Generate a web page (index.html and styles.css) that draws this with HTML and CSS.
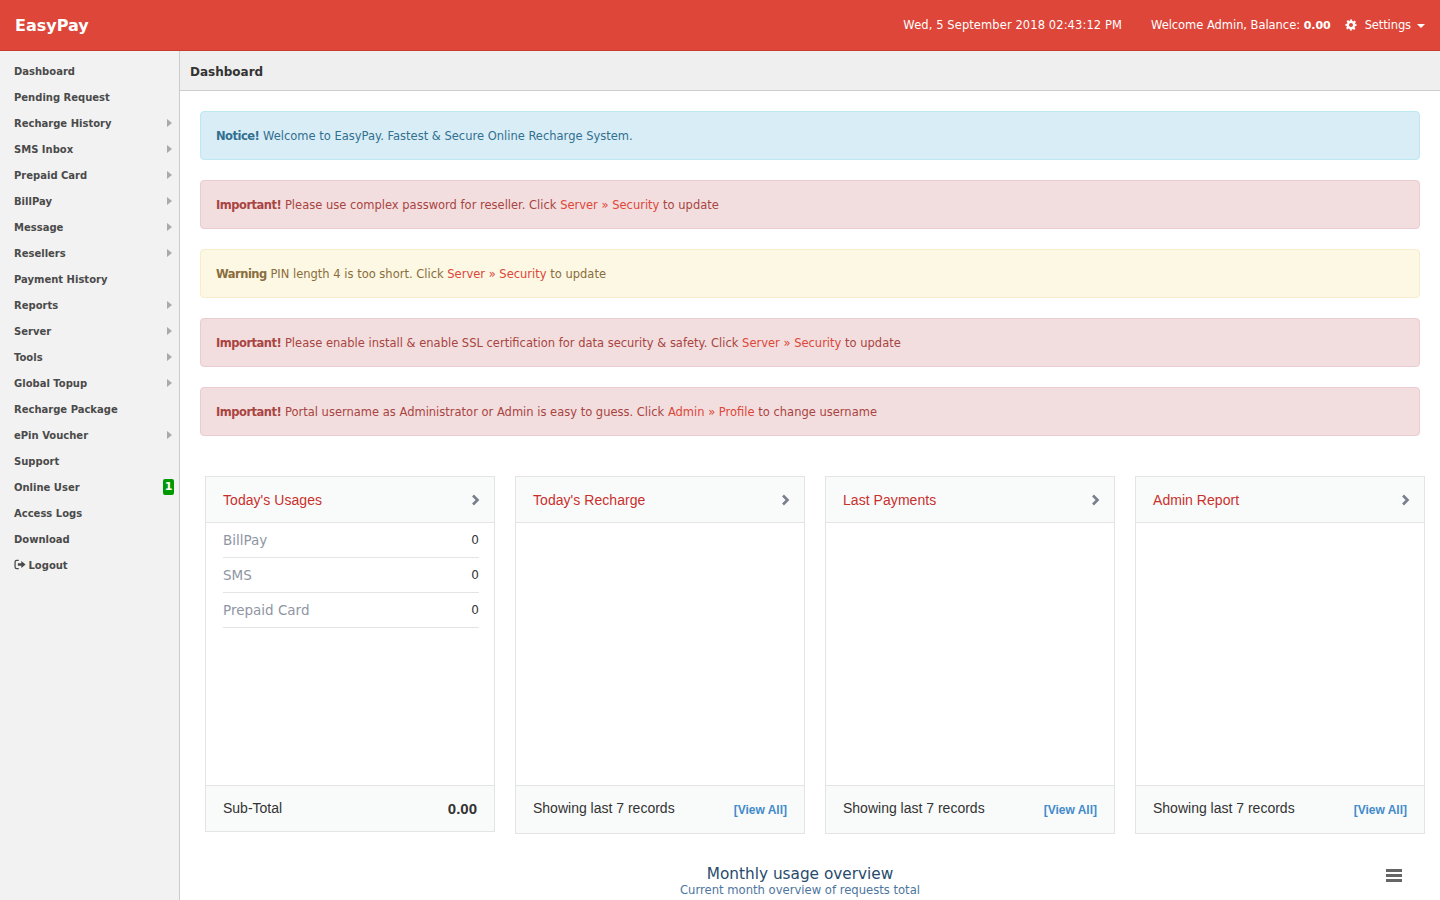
FILE: index.html
```html
<!DOCTYPE html>
<html lang="en">
<head>
    <meta charset="UTF-8">
    <meta name="viewport" content="width=device-width, initial-scale=1.0">
    <title>EasyPay - Dashboard</title>
    <link rel="stylesheet" href="styles.css">
</head>
<body>
    <header class="topbar">
        <a class="brand" href="#">EasyPay</a>
        <div class="topbar-right">
            <span class="clock">Wed, 5 September 2018 02:43:12 PM</span>
            <span class="welcome">Welcome Admin, Balance: <strong>0.00</strong></span>
            <a class="settings" href="#">
                <svg class="gear" viewBox="0 0 24 24"><path fill-rule="evenodd" d="M10 1h4l.6 3.1 1.9.8 2.6-1.8 2.8 2.8-1.8 2.6.8 1.9L23 10v4l-3.1.6-.8 1.9 1.8 2.6-2.8 2.8-2.6-1.8-1.9.8L13.900 23H10l-.6-3.100-1.900-.8-2.600 1.800-2.800-2.800 1.800-2.600-.8-1.900L1 14v-4l3.100-.6.8-1.900-1.800-2.600 2.800-2.800 2.600 1.800 1.900-.8zM12 8a4 4 0 1 0 0 8 4 4 0 0 0 0-8z"/></svg>
                Settings
                <span class="caret"></span>
            </a>
        </div>
    </header>

    <div class="layout">
        <nav class="sidebar">
            <a class="side-link" href="#">Dashboard</a>
            <a class="side-link" href="#">Pending Request</a>
            <a class="side-link has-sub" href="#">Recharge History</a>
            <a class="side-link has-sub" href="#">SMS Inbox</a>
            <a class="side-link has-sub" href="#">Prepaid Card</a>
            <a class="side-link has-sub" href="#">BillPay</a>
            <a class="side-link has-sub" href="#">Message</a>
            <a class="side-link has-sub" href="#">Resellers</a>
            <a class="side-link" href="#">Payment History</a>
            <a class="side-link has-sub" href="#">Reports</a>
            <a class="side-link has-sub" href="#">Server</a>
            <a class="side-link has-sub" href="#">Tools</a>
            <a class="side-link has-sub" href="#">Global Topup</a>
            <a class="side-link" href="#">Recharge Package</a>
            <a class="side-link has-sub" href="#">ePin Voucher</a>
            <a class="side-link" href="#">Support</a>
            <a class="side-link" href="#">Online User <span class="badge">1</span></a>
            <a class="side-link" href="#">Access Logs</a>
            <a class="side-link" href="#">Download</a>
            <a class="side-link" href="#">
                <svg class="logout-icon" viewBox="0 0 14 12"><path d="M5.500 0.500H3.200A2.700 2.700 0 0 0 .5 3.200v5.600a2.700 2.700 0 0 0 2.700 2.700h2.300V10H3.200A1.200 1.200 0 0 1 2 8.800V3.200A1.200 1.200 0 0 1 3.200 2h2.300z"/><path d="M8.500 2 13.500 6 8.500 10V7.600H4.500V4.400h4z"/></svg>
                Logout
            </a>
        </nav>

        <main class="main">
            <div class="page-title">Dashboard</div>
            <div class="content">
                <div class="alert alert-info"><strong>Notice!</strong> Welcome to EasyPay. Fastest &amp; Secure Online Recharge System.</div>
                <div class="alert alert-danger"><strong>Important!</strong> Please use complex password for reseller. Click <a href="#">Server » Security</a> to update</div>
                <div class="alert alert-warning"><strong>Warning</strong> PIN length 4 is too short. Click <a href="#">Server » Security</a> to update</div>
                <div class="alert alert-danger"><strong>Important!</strong> Please enable install &amp; enable SSL certification for data security &amp; safety. Click <a href="#">Server » Security</a> to update</div>
                <div class="alert alert-danger"><strong>Important!</strong> Portal username as Administrator or Admin is easy to guess. Click <a href="#">Admin » Profile</a> to change username</div>

                <div class="cards">
                    <section class="card card-short">
                        <div class="card-head">
                            <span>Today's Usages</span>
                            <svg class="chevron" viewBox="0 0 10 12"><path d="M2 1.500l4.500 4.500-4.500 4.500"/></svg>
                        </div>
                        <div class="card-body">
                            <div class="usage-row"><span>BillPay</span><b>0</b></div>
                            <div class="usage-row"><span>SMS</span><b>0</b></div>
                            <div class="usage-row"><span>Prepaid Card</span><b>0</b></div>
                        </div>
                        <div class="card-foot">
                            <span>Sub-Total</span>
                            <strong class="total">0.00</strong>
                        </div>
                    </section>
                    <section class="card">
                        <div class="card-head">
                            <span>Today's Recharge</span>
                            <svg class="chevron" viewBox="0 0 10 12"><path d="M2 1.500l4.500 4.500-4.500 4.500"/></svg>
                        </div>
                        <div class="card-body"></div>
                        <div class="card-foot">
                            <span>Showing last 7 records</span>
                            <a class="view-all" href="#">[View All]</a>
                        </div>
                    </section>
                    <section class="card">
                        <div class="card-head">
                            <span>Last Payments</span>
                            <svg class="chevron" viewBox="0 0 10 12"><path d="M2 1.500l4.500 4.500-4.500 4.500"/></svg>
                        </div>
                        <div class="card-body"></div>
                        <div class="card-foot">
                            <span>Showing last 7 records</span>
                            <a class="view-all" href="#">[View All]</a>
                        </div>
                    </section>
                    <section class="card">
                        <div class="card-head">
                            <span>Admin Report</span>
                            <svg class="chevron" viewBox="0 0 10 12"><path d="M2 1.500l4.500 4.500-4.500 4.500"/></svg>
                        </div>
                        <div class="card-body"></div>
                        <div class="card-foot">
                            <span>Showing last 7 records</span>
                            <a class="view-all" href="#">[View All]</a>
                        </div>
                    </section>
                </div>

                <div class="chart">
                    <div class="chart-title">Monthly usage overview</div>
                    <div class="chart-sub">Current month overview of requests total</div>
                    <div class="chart-menu"><span></span><span></span><span></span></div>
                </div>
            </div>
        </main>
    </div>
</body>
</html>
```

FILE: styles.css
```css
html, body {
    height: 900px;
    overflow: hidden;
}
body {
    margin: 0;
    padding: 0;
    font-family: "DejaVu Sans", Verdana, sans-serif;
    font-size: 11.5px;
    color: #333;
    background-color: #fff;
}
a {
    text-decoration: none;
}
.topbar {
    display: flex;
    justify-content: space-between;
    align-items: center;
    height: 50px;
    padding: 0 15px;
    background-color: #dd4639;
    border-bottom: 1px solid #c93a2e;
    color: #fff;
}
.brand {
    font-size: 16px;
    font-weight: bold;
    color: #fff;
}
.topbar-right {
    display: flex;
    align-items: center;
    font-size: 11.5px;
}
.clock {
    margin-right: 29px;
    letter-spacing: 0.09px;
}
.welcome {
    margin-right: 14px;
    letter-spacing: -0.04px;
}
.welcome strong {
    font-size: 11px;
}
.settings {
    display: flex;
    align-items: center;
    color: #fff;
    letter-spacing: -0.1px;
}
.gear {
    width: 12px;
    height: 12px;
    margin-right: 8px;
    fill: #fff;
}
.caret {
    width: 0;
    height: 0;
    margin-left: 6px;
    margin-top: 2px;
    border-left: 4px solid transparent;
    border-right: 4px solid transparent;
    border-top: 4px solid #fff;
}
.layout {
    display: grid;
    grid-template-columns: 180px 1fr;
    height: 849px;
}
.sidebar {
    padding-top: 7px;
    background-color: #f2f2f2;
    border-right: 1px solid #ccc;
}
.side-link {
    position: relative;
    display: block;
    height: 26px;
    padding-left: 14px;
    line-height: 28px;
    font-size: 10px;
    font-weight: bold;
    color: #4a4a4a;
}
.side-link.has-sub::after {
    content: "";
    position: absolute;
    right: 7px;
    top: 9px;
    border-top: 4px solid transparent;
    border-bottom: 4px solid transparent;
    border-left: 5px solid #aaa;
}
.badge {
    position: absolute;
    right: 5px;
    top: 5px;
    width: 11px;
    height: 16px;
    border-radius: 2px;
    background-color: #090;
    color: #fff;
    font-size: 11px;
    line-height: 16px;
    text-align: center;
}
.logout-icon {
    width: 12px;
    height: 11px;
    margin-right: -1px;
    fill: #4a4a4a;
    vertical-align: -1px;
}
.main {
    min-width: 0;
}
.page-title {
    height: 39px;
    padding-left: 10px;
    line-height: 42px;
    font-size: 12px;
    font-weight: bold;
    color: #333;
    background-color: #efefef;
    border-bottom: 1px solid #ccc;
}
.content {
    padding: 20px 20px 0;
}
.alert {
    height: 47px;
    margin-bottom: 20px;
    padding-left: 15px;
    line-height: 48px;
    border: 1px solid;
    border-radius: 4px;
}
.alert strong {
    letter-spacing: -0.5px;
}
.alert a {
    color: #dd4639;
}
.alert-info {
    color: #31708f;
    background-color: #d9edf7;
    border-color: #bce8f1;
}
.alert-danger {
    color: #a94442;
    background-color: #f2dede;
    border-color: #ebccd1;
}
.alert-warning {
    color: #8a6d3b;
    background-color: #fcf8e3;
    border-color: #faebcc;
}
.cards {
    display: grid;
    grid-template-columns: repeat(4, 290px);
    gap: 20px;
    align-items: start;
    margin-top: 40px;
    margin-left: 5px;
}
.card {
    display: flex;
    flex-direction: column;
    box-sizing: border-box;
    border: 1px solid #e4e4e4;
    font-family: "Liberation Sans", Arial, sans-serif;
}
.card-head {
    display: flex;
    justify-content: space-between;
    align-items: center;
    flex: none;
    height: 45px;
    padding: 0 13px 0 17px;
    font-size: 14px;
    letter-spacing: 0.05px;
    color: #c9302c;
    background-color: #f9fafa;
    border-bottom: 1px solid #e4e4e4;
}
.chevron {
    width: 10px;
    height: 12px;
    fill: none;
    stroke: #7a7f8c;
    stroke-width: 2.6;
}
.card-body {
    height: 262px;
    padding: 0 15px 0 17px;
}
.usage-row {
    display: flex;
    justify-content: space-between;
    align-items: center;
    height: 34px;
    font-family: "DejaVu Sans", Verdana, sans-serif;
    font-size: 13.5px;
    color: #8f96a3;
    border-bottom: 1px solid #e4e4e4;
}
.usage-row b {
    font-size: 12px;
    font-weight: normal;
    color: #333;
}
.card-foot {
    display: flex;
    justify-content: space-between;
    align-items: flex-start;
    flex: none;
    height: 48px;
    padding: 14px 17px 0;
    box-sizing: border-box;
    font-size: 14px;
    color: #333;
    background-color: #f9fafa;
    border-top: 1px solid #e4e4e4;
}
.card-short .card-foot {
    height: 46px;
}
.total {
    font-size: 15px;
}
.view-all {
    margin-top: 3px;
    font-size: 12px;
    font-weight: bold;
    color: #428bca;
}
.chart {
    position: relative;
    margin: 31px 0 0 -20px;
    text-align: center;
}
.chart-title {
    font-size: 15.3px;
    line-height: 18px;
    color: #274b6d;
}
.chart-sub {
    font-size: 11.6px;
    line-height: 14px;
    color: #4d759e;
}
.chart-menu {
    position: absolute;
    right: 18px;
    top: 4px;
    width: 16px;
}
.chart-menu span {
    display: block;
    height: 3px;
    margin-bottom: 2px;
    background-color: #666;
}
```
